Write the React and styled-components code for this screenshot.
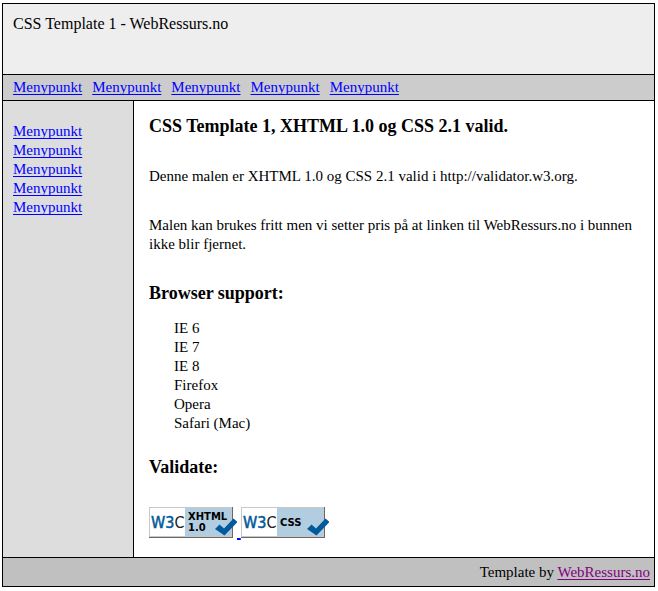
import React from 'react';
import styled, { createGlobalStyle } from 'styled-components';

const GlobalStyle = createGlobalStyle`
    body {
        margin: 0;
        background-color: #ffffff;
        color: #000000;
        font-family: "Liberation Serif", "Times New Roman", serif;
        font-size: 15px;
        line-height: 19px;
    }
`;

const Page = styled.div`
    margin: 3px 3px 4px 2px;
    border: 1px solid #000000;
`;

const Header = styled.header`
    box-sizing: border-box;
    height: 71px;
    padding: 10px;
    font-size: 16px;
    line-height: 20px;
    background-color: #eeeeee;
    border-bottom: 1px solid #000000;
`;

const TopMenu = styled.nav`
    display: flex;
    gap: 10px;
    padding: 3px 10px;
    background-color: #cccccc;
    border-bottom: 1px solid #000000;
`;

const Columns = styled.div`
    display: flex;
`;

const SideMenu = styled.nav`
    box-sizing: border-box;
    width: 131px;
    flex-shrink: 0;
    display: flex;
    flex-direction: column;
    align-items: flex-start;
    padding: 21px 10px;
    background-color: #dddddd;
    border-right: 1px solid #000000;
`;

const MenuLink = styled.a`
    color: ${(props) => (props.$visited ? '#800080' : '#0000ff')};
    text-decoration: underline;
    text-decoration-skip-ink: none;
    text-underline-offset: 2px;
`;

const Content = styled.main`
    flex: 1;
    min-width: 0;
    padding: 16px 15px 19px;
`;

const Heading = styled.h3`
    margin: 0;
    padding-bottom: 2px;
    font-size: 18px;
    line-height: 18px;
`;

const Paragraph = styled.p`
    margin: 30px 0;
`;

const BrowserList = styled.ul`
    margin: 15px 0 25px;
    padding: 0 0 0 25px;
    list-style: none;
`;

const Badges = styled.div`
    display: flex;
    margin-top: 29px;
`;

const BadgeLink = styled.a`
    display: flex;
    height: 31px;
    color: #0000ff;
`;

const BadgeSpace = styled.span`
    white-space: pre;
    padding-top: 16px;
    text-decoration: underline;
    text-underline-offset: 2px;
`;

const BadgeImage = styled.svg`
    display: block;
    width: 88px;
    height: 31px;
`;

const Footer = styled.footer`
    padding: 5px 4px 4px;
    background-color: #c0c0c0;
    border-top: 1px solid #000000;
    text-align: right;
`;

const menuItems = [1, 2, 3, 4, 5];
const browsers = ['IE 6', 'IE 7', 'IE 8', 'Firefox', 'Opera', 'Safari (Mac)'];

function Badge({ title, lines }) {
    return (
        <BadgeImage viewBox="0 0 88 31" role="img" aria-label={title}>
            <rect width="84" height="31" fill="#686868" />
            <rect width="83" height="30" fill="#c8c8c8" />
            <rect x="1" y="1" width="35" height="28" fill="#ffffff" />
            <rect x="36" y="1" width="46" height="28" fill="#b2cde0" />
            <text
                x="2"
                y="21"
                fontFamily="DejaVu Sans Condensed, DejaVu Sans, sans-serif"
                fontSize="16"
                fill="#005a9c"
                stroke="#005a9c"
                strokeWidth="0.5"
            >
                W3<tspan fill="#222222" stroke="none">C</tspan>
            </text>
            <g fontFamily="DejaVu Sans, sans-serif" fontSize="10" fontWeight="bold" fill="#000000">
                {lines.map((line) => (
                    <text key={line.text} x={line.x} y={line.y}>{line.text}</text>
                ))}
            </g>
            <path d="M66 22 L70.5 17.5 L75 21.5 L84.5 11.5 L88.5 15 L75.5 28.5 Z" fill="#005a9c" />
        </BadgeImage>
    );
}

function App() {
    return (
        <>
            <GlobalStyle />
            <Page>
                <Header>CSS Template 1 - WebRessurs.no</Header>
                <TopMenu>
                    {menuItems.map((item) => (
                        <MenuLink key={item} href="#">Menypunkt</MenuLink>
                    ))}
                </TopMenu>
                <Columns>
                    <SideMenu>
                        {menuItems.map((item) => (
                            <MenuLink key={item} href="#">Menypunkt</MenuLink>
                        ))}
                    </SideMenu>
                    <Content>
                        <Heading>CSS Template 1, XHTML 1.0 og CSS 2.1 valid.</Heading>
                        <Paragraph>Denne malen er XHTML 1.0 og CSS 2.1 valid i http://validator.w3.org.</Paragraph>
                        <Paragraph>
                            Malen kan brukes fritt men vi setter pris på at linken til WebRessurs.no i bunnen ikke blir fjernet.
                        </Paragraph>
                        <Heading>Browser support:</Heading>
                        <BrowserList>
                            {browsers.map((browser) => (
                                <li key={browser}>{browser}</li>
                            ))}
                        </BrowserList>
                        <Heading>Validate:</Heading>
                        <Badges>
                            <BadgeLink href="#">
                                <Badge
                                    title="Valid XHTML 1.0"
                                    lines={[{ text: 'XHTML', x: 39, y: 13 }, { text: '1.0', x: 39, y: 24 }]}
                                />
                                <BadgeSpace> </BadgeSpace>
                            </BadgeLink>
                            <BadgeLink href="#">
                                <Badge title="Valid CSS" lines={[{ text: 'CSS', x: 39, y: 19 }]} />
                            </BadgeLink>
                        </Badges>
                    </Content>
                </Columns>
                <Footer>
                    Template by <MenuLink href="#" $visited>WebRessurs.no</MenuLink>
                </Footer>
            </Page>
        </>
    );
}

export default App;
